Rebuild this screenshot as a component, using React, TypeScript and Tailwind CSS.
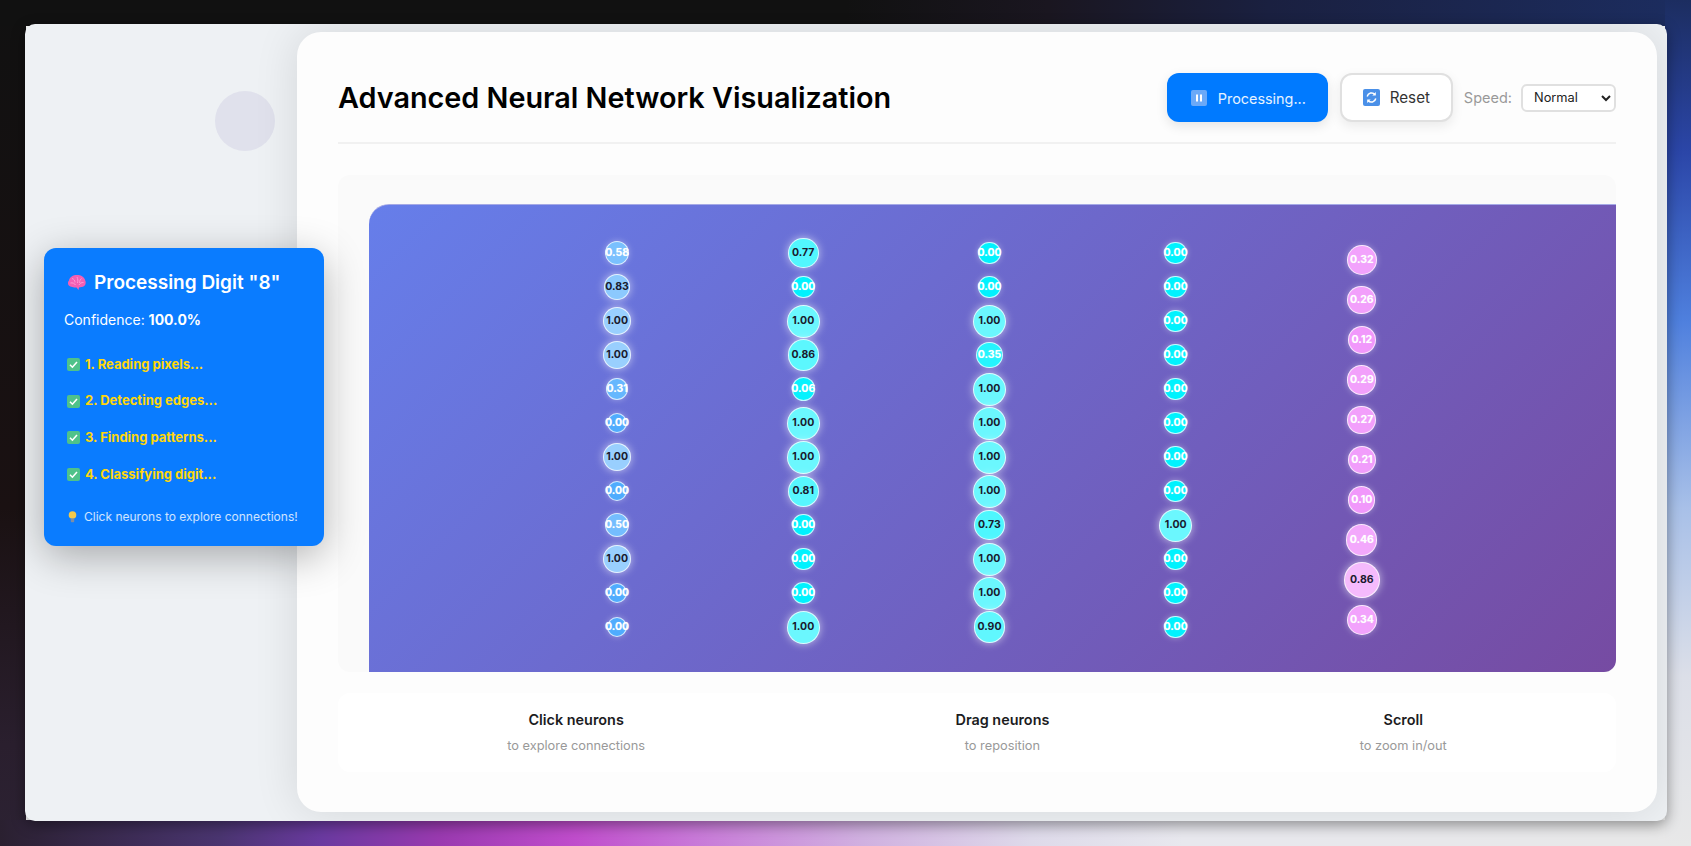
import React from "react";

const layers = [
  { rgb: [79, 172, 254], base: 20.5, grow: 7, rowH: "h-[34px]", top: "pt-[31px]", values: [0.58, 0.83, 1, 1, 0.31, 0, 1, 0, 0.5, 1, 0, 0] },
  { rgb: [0, 242, 254], base: 22.5, grow: 10.5, rowH: "h-[34px]", top: "pt-[31px]", values: [0.77, 0, 1, 0.86, 0.06, 1, 1, 0.81, 0, 0, 0, 1] },
  { rgb: [0, 242, 254], base: 22.5, grow: 10.5, rowH: "h-[34px]", top: "pt-[31px]", values: [0, 0, 1, 0.35, 1, 1, 1, 1, 0.73, 1, 1, 0.9] },
  { rgb: [0, 242, 254], base: 22.5, grow: 10.5, rowH: "h-[34px]", top: "pt-[31px]", values: [0, 0, 0, 0, 0, 0, 0, 0, 1, 0, 0, 0] },
  { rgb: [240, 147, 251], base: 26, grow: 11, rowH: "h-[40px]", top: "pt-[35px]", values: [0.32, 0.26, 0.12, 0.29, 0.27, 0.21, 0.1, 0.46, 0.86, 0.34] },
];

function Neuron({ value, rgb, base, grow }: { value: number; rgb: number[]; base: number; grow: number }) {
  const size = base + grow * value;
  const mix = value * 0.42;
  const fill = rgb.map((c) => Math.round(c + (255 - c) * mix));
  const active = value > 0.7;
  return (
    <div
      className={`flex items-center justify-center rounded-full border-[1.500px] border-white/75 text-[10.500px] font-bold whitespace-nowrap ${
        active
          ? "text-[#1a1a2e] shadow-[0_0_9px_rgba(255,255,255,0.6)]"
          : "text-white shadow-[0_0_6px_rgba(255,255,255,0.35)] [text-shadow:0_0_1px_rgba(255,255,255,0.5)]"
      }`}
      style={{ width: size, height: size, backgroundColor: `rgb(${fill.join(",")})` }}
    >
      {value.toFixed(2)}
    </div>
  );
}

function BrainIcon() {
  return (
    <svg width="20" height="18" viewBox="0 0 20 18" className="shrink-0">
      <path d="M2 6.5C2.5 3 6 1 10 1s7.6 2 8.2 5.500c.8 1 .9 4-1 5.500-1.500 1.200-3.700 1.300-5.200 1.500l-.5 2.500-2-2.400C6.500 13.400 3.500 13.200 1.800 11.500.5 10 .8 7.500 2 6.500Z" fill="#f45fb4" />
      <path d="M5 4.500c2 .5 3 2 3 4M10 3c1 2 1 4 .5 6M14.500 4.500c-1.500 1-2 2.500-1.800 4.500M3.500 9c2-.5 4 .3 5 2M16.500 8.500c-2-.2-3.500.7-4.500 2.500" stroke="#ff9ad5" strokeWidth="1" fill="none" />
    </svg>
  );
}

function CheckIcon() {
  return (
    <svg width="13" height="13" viewBox="0 0 13 13" className="shrink-0">
      <rect width="13" height="13" rx="2" fill="#4fc28a" />
      <path d="M3 6.800 5.400 9.200 10 4" stroke="#fff" strokeWidth="1.600" fill="none" />
    </svg>
  );
}

function BulbIcon() {
  return (
    <svg width="9" height="12" viewBox="0 0 9 12" className="shrink-0">
      <circle cx="4.500" cy="4" r="3.800" fill="#f2c94c" />
      <rect x="2.800" y="7.500" width="3.400" height="3.800" rx="0.800" fill="#7f8da3" />
    </svg>
  );
}

function PauseIcon() {
  return (
    <svg width="16" height="16" viewBox="0 0 16 16" className="shrink-0">
      <rect width="16" height="16" rx="2" fill="#6aa9f8" />
      <rect x="5" y="4.500" width="2" height="7" fill="#fff" />
      <rect x="9" y="4.500" width="2" height="7" fill="#fff" />
    </svg>
  );
}

function RefreshIcon() {
  return (
    <svg width="17" height="17" viewBox="0 0 17 17" className="shrink-0">
      <rect width="17" height="17" rx="2" fill="#4a90e8" />
      <path d="M4.200 7.500A4.500 4.500 0 0 1 12 5.500M12.800 9.500A4.500 4.500 0 0 1 5 11.500" stroke="#fff" strokeWidth="1.500" fill="none" />
      <path d="M12.800 3v3.500H9.300ZM4.200 14v-3.500h3.500Z" fill="#fff" />
    </svg>
  );
}

const steps = ["1. Reading pixels...", "2. Detecting edges...", "3. Finding patterns...", "4. Classifying digit..."];

const tips = [
  { title: "Click neurons", sub: "to explore connections" },
  { title: "Drag neurons", sub: "to reposition" },
  { title: "Scroll", sub: "to zoom in/out" },
];

export default function App() {
  return (
    <div className="w-[1691px] h-[846px] overflow-hidden pt-[24px] pl-[25px] font-['Inter',sans-serif] bg-no-repeat bg-[linear-gradient(180deg,#1c2d60_0%,#2b46a8_18%,#4f80de_38%,#a8c0e8_60%,#dcdfe8_80%,#e8e8e8_100%),linear-gradient(90deg,#2a2030_0%,#4a3570_13%,#6a3aa0_19%,#9a3ab0_26%,#c04dcc_34%,#c878d8_41%,#d0b0e0_51%,#dedaea_61%,#e8e8ee_70%,#e8e8e8_100%),linear-gradient(90deg,#111111_0%,#111111_50%,#1a1620_62%,#1a2040_75%,#1c2d60_100%),linear-gradient(180deg,#111111_0%,#1a1112_60%,#2a1f2e_88%,#2c2233_100%)] [background-size:26px_100%,100%_26px,100%_26px,26px_100%] [background-position:right_top,left_bottom,left_top,left_top]">
      {/* Window */}
      <div className="relative w-[1642px] h-[797px] pt-[8px] pl-[272px] rounded-[10px] overflow-hidden bg-[#eef1f4] shadow-[0_4px_14px_rgba(0,0,0,0.4)]">
        {/* Decorative circle */}
        <div className="absolute left-[190px] top-[67px] w-[60px] h-[60px] rounded-full bg-[#e0e1ec]" />

        {/* Main card */}
        <div className="relative w-[1360px] h-[780px] px-[41px] pt-[41px] rounded-[24px] bg-[#fdfdfd] shadow-[0_0_45px_rgba(0,0,0,0.11)]">
          <header className="flex items-center justify-between h-[71px] pb-[20px] border-b-2 border-[#f1f1f1]">
            <h1 className="text-[28.800px] font-semibold text-black">Advanced Neural Network Visualization</h1>
            <div className="flex items-center">
              <button className="flex items-center justify-center gap-[11px] pl-[2px] w-[161px] h-[49px] rounded-[12px] bg-[#007aff] text-[14.400px] font-normal text-white/90 shadow-[0_4px_12px_rgba(0,0,0,0.1)]">
                <PauseIcon />
                <span className="pt-[2px]">Processing...</span>
              </button>
              <button className="flex items-center justify-center gap-[10px] ml-[12px] w-[113px] h-[49px] rounded-[12px] border-2 border-[#e0e0e0] bg-white text-[15.200px] font-normal text-[#333] shadow-[0_4px_12px_rgba(0,0,0,0.08)]">
                <RefreshIcon />
                <span className="pt-[2px]">Reset</span>
              </button>
              <span className="ml-[11px] text-[14.500px] text-[#999]">Speed:</span>
              <select defaultValue="Normal" className="ml-[9px] w-[95px] h-[28px] pl-[7px] rounded-[6px] border-2 border-[#e0e0e0] bg-white text-[12.800px] font-normal text-[#222]">
                <option>Slow</option>
                <option>Normal</option>
                <option>Fast</option>
              </select>
            </div>
          </header>

          {/* Canvas */}
          <div className="mt-[31px] h-[497px] pl-[31px] pt-[29px] rounded-[12px] overflow-hidden bg-[#fafafa]">
            <div className="flex h-[468px] pl-[155px] rounded-tl-[20px] border-t border-[#a5a9e6] bg-[linear-gradient(135deg,#667eea_0%,#764ba2_100%)]">
              {layers.map((layer, i) => (
                <div key={i} className={`w-[186.200px] ${layer.top}`}>
                  {layer.values.map((v, j) => (
                    <div key={j} className={`flex items-center justify-center ${layer.rowH}`}>
                      <Neuron value={v} rgb={layer.rgb} base={layer.base} grow={layer.grow} />
                    </div>
                  ))}
                </div>
              ))}
            </div>
          </div>

          {/* Tips */}
          <div className="flex justify-around h-[79px] mt-[21px] px-[14px] pt-[16px] rounded-[12px] bg-white">
            {tips.map((tip) => (
              <div key={tip.title} className="text-center">
                <div className="text-[14.400px] leading-[22px] font-semibold text-[#1c1c1e]">{tip.title}</div>
                <div className="mt-[4px] text-[12.800px] leading-[22px] text-[#999]">{tip.sub}</div>
              </div>
            ))}
          </div>
        </div>

        {/* Status popup */}
        <div className="absolute left-[19px] top-[224px] w-[280px] h-[298px] px-[20px] pt-[20px] rounded-[12px] bg-[#0a7cff] text-white shadow-[0_10px_40px_rgba(0,0,0,0.3)]">
          <div className="flex items-center gap-[7px] h-[30px] pl-[3px] text-[19px] font-semibold">
            <BrainIcon />
            Processing Digit "8"
          </div>
          <div className="mt-[10px] h-[24px] text-[14px] leading-[24px]">
            Confidence: <strong className="font-bold">100.0%</strong>
          </div>
          <div className="mt-[22.500px] flex flex-col gap-[16.600px] pl-[3px]">
            {steps.map((s) => (
              <div key={s} className="flex items-center gap-[5px] h-[20px] text-[13px] font-bold text-[#ffd60a]">
                <CheckIcon />
                {s}
              </div>
            ))}
          </div>
          <div className="mt-[24px] flex items-center gap-[7px] pl-[4px] text-[12px] text-white/80">
            <BulbIcon />
            Click neurons to explore connections!
          </div>
        </div>
      </div>
    </div>
  );
}
